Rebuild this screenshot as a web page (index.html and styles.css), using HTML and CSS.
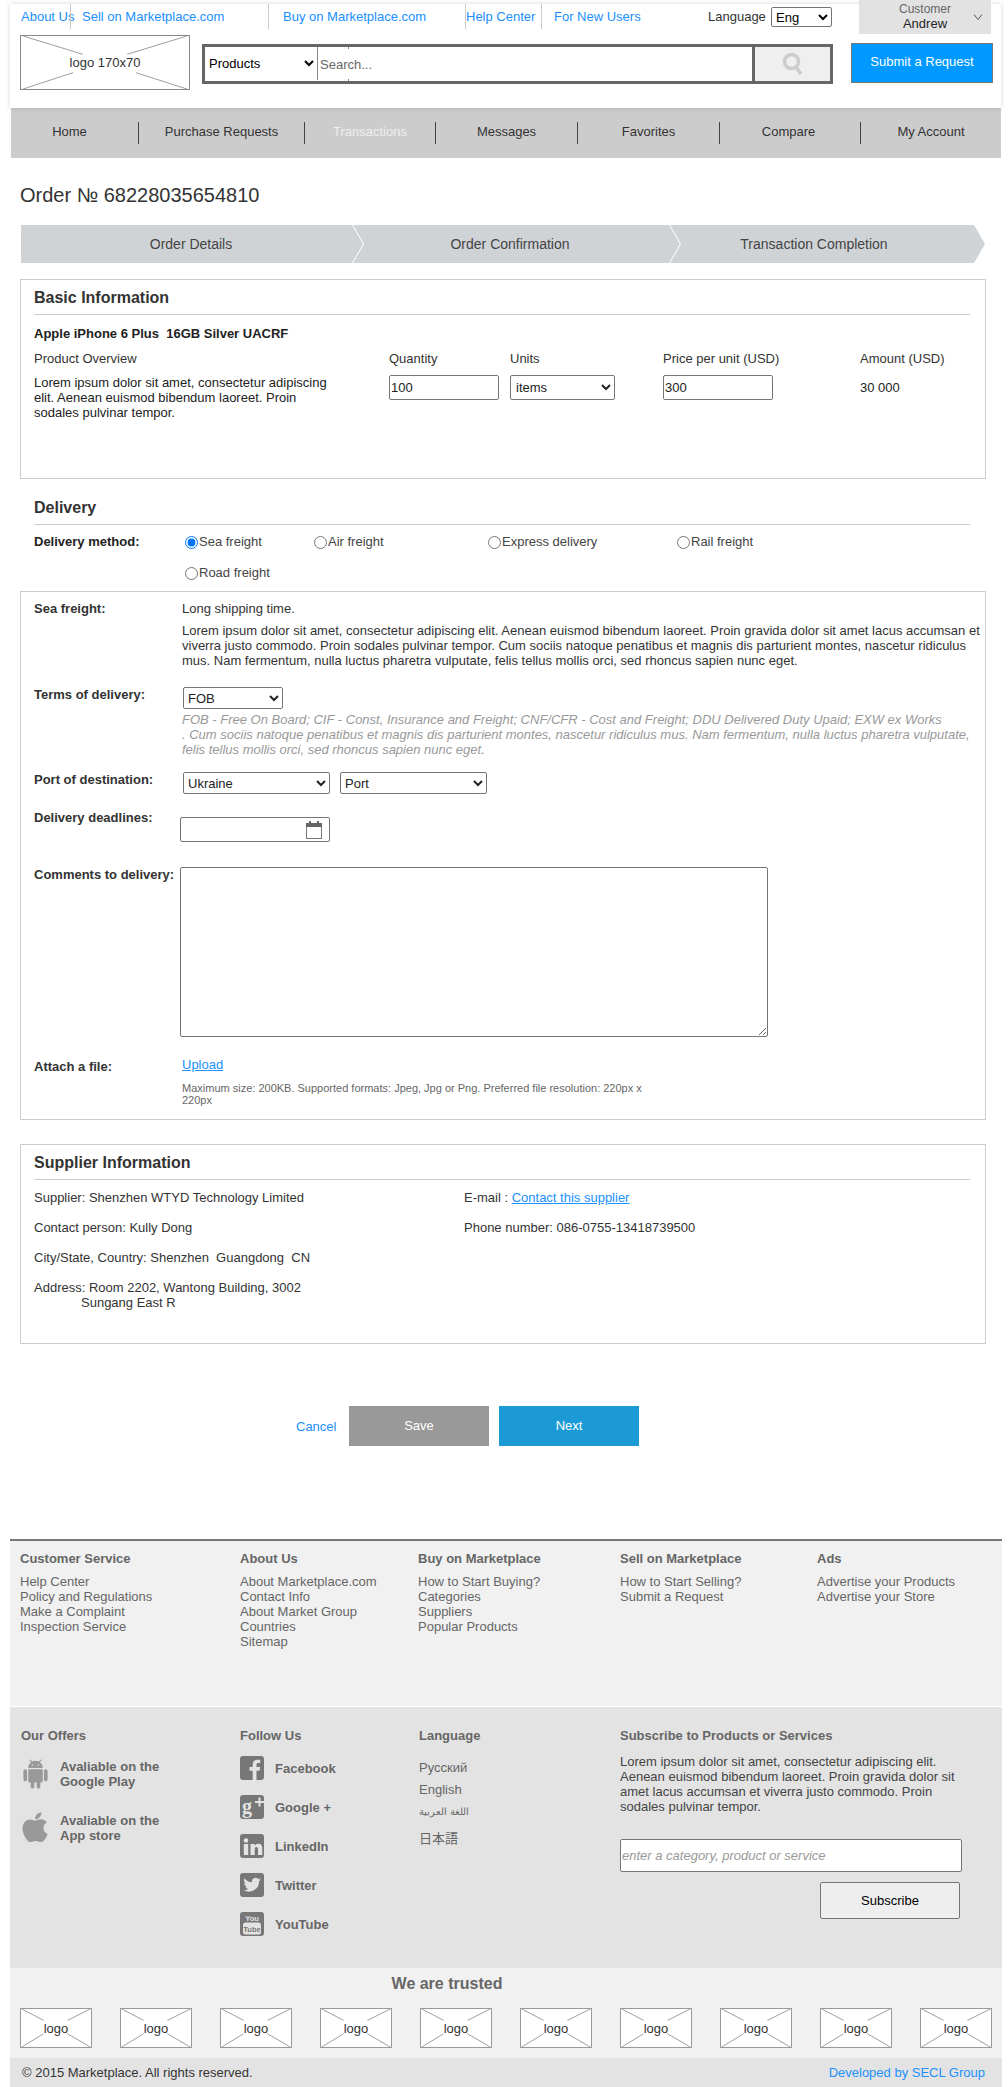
FILE: index.html
```html
<!DOCTYPE html>
<html lang="en">
<head>
<meta charset="utf-8">
<title>Order № 68228035654810</title>
<link rel="stylesheet" href="styles.css">
</head>
<body>
<svg class="defs" width="0" height="0" aria-hidden="true">
  <symbol id="ph-big" viewBox="0 0 170 55"><path d="M0 0L62 19M170 0L108 19M0 55L52 38M170 55L117 38"/></symbol>
  <symbol id="ph-small" viewBox="0 0 72 40"><path d="M0 0L23 12M72 0L48 12M0 40L23 26M72 40L48 26"/></symbol>
  <symbol id="i-android" viewBox="0 0 24 24"><path d="M6 18c0 .55.45 1 1 1h1v3.5c0 .83.67 1.5 1.5 1.5s1.5-.67 1.5-1.5V19h2v3.5c0 .83.67 1.5 1.5 1.5s1.5-.67 1.5-1.5V19h1c.55 0 1-.45 1-1V8H6v10zM3.5 8C2.67 8 2 8.67 2 9.5v7c0 .83.67 1.5 1.5 1.5S5 17.33 5 16.5v-7C5 8.67 4.33 8 3.5 8zm17 0c-.83 0-1.5.67-1.5 1.5v7c0 .83.67 1.5 1.5 1.5s1.5-.67 1.5-1.5v-7c0-.83-.67-1.5-1.5-1.5zm-4.97-5.84l1.3-1.3c.2-.2.2-.51 0-.71-.2-.2-.51-.2-.71 0l-1.48 1.48C13.85 1.23 12.95 1 12 1c-.96 0-1.86.23-2.66.63L7.85.15c-.2-.2-.51-.2-.71 0-.2.2-.2.51 0 .71l1.31 1.31C6.97 3.26 6 5.01 6 7h12c0-1.99-.97-3.75-2.47-4.84zM10 5H9V4h1v1zm5 0h-1V4h1v1z"/></symbol>
  <symbol id="i-apple" viewBox="3.5 3 17.5 19"><path d="M17.05 20.28c-.98.95-2.05.8-3.08.35-1.09-.46-2.09-.48-3.24 0-1.44.62-2.2.44-3.06-.35C2.79 15.25 3.51 7.59 9.05 7.31c1.35.07 2.29.74 3.08.8 1.18-.24 2.31-.93 3.57-.84 1.51.12 2.65.72 3.4 1.8-3.12 1.87-2.38 5.98.48 7.13-.57 1.5-1.31 2.99-2.54 4.09zM12.03 7.25c-.15-2.23 1.66-4.07 3.74-4.25.29 2.58-2.34 4.5-3.74 4.25z"/></symbol>
</svg>

<header class="top">
  <div class="toplinks">
    <a class="tl tl-about" href="#">About Us</a>
    <a class="tl tl-sell" href="#">Sell on Marketplace.com</a>
    <a class="tl tl-buy" href="#">Buy on Marketplace.com</a>
    <a class="tl tl-help" href="#">Help Center</a>
    <a class="tl tl-new" href="#">For New Users</a>
    <span class="lang-label">Language</span>
    <select class="lang-select"><option>Eng</option></select>
    <div class="customer">
      <div class="customer-names"><span class="cust-role">Customer</span><span class="cust-name">Andrew</span></div>
      <svg class="chev" width="10" height="8" viewBox="0 0 10 8"><path d="M1 1.500L5 6.500L9 1.500"/></svg>
    </div>
  </div>
  <div class="searchrow">
    <div class="ph ph-logo"><svg class="ph-lines"><use href="#ph-big"/></svg><span>logo 170x70</span></div>
    <div class="searchbar">
      <select class="search-cat"><option>Products</option></select>
      <input class="search-input" type="text" placeholder="Search...">
      <button class="search-btn" type="button" aria-label="Search">
        <svg width="22" height="24" viewBox="0 0 22 24"><circle cx="9.500" cy="9.500" r="7"/><path d="M14 15L19 22"/></svg>
      </button>
    </div>
    <a class="submit" href="#">Submit a Request</a>
  </div>
</header>

<nav class="mainnav">
  <a class="nv nv1" href="#">Home</a>
  <a class="nv nv2" href="#">Purchase Requests</a>
  <a class="nv nv3 nv-active" href="#">Transactions</a>
  <a class="nv nv4" href="#">Messages</a>
  <a class="nv nv5" href="#">Favorites</a>
  <a class="nv nv6" href="#">Compare</a>
  <a class="nv nv7" href="#">My Account</a>
</nav>

<main class="content">
  <h1 class="order-title">Order № 68228035654810</h1>

  <div class="steps">
    <div class="step step1">Order Details</div>
    <div class="step step2">Order Confirmation</div>
    <div class="step step3">Transaction Completion</div>
  </div>

  <section class="box box-basic">
    <h2 class="sec-title">Basic Information</h2>
    <div class="product-name">Apple iPhone 6 Plus&nbsp; 16GB Silver UACRF</div>
    <div class="order-grid">
      <div class="og-label">Product Overview</div>
      <div class="og-label">Quantity</div>
      <div class="og-label">Units</div>
      <div class="og-label">Price per unit (USD)</div>
      <div class="og-label">Amount (USD)</div>
      <p class="og-desc">Lorem ipsum dolor sit amet, consectetur adipiscing elit. Aenean euismod bibendum laoreet. Proin sodales pulvinar tempor.</p>
      <div><input class="field field-num" type="text" value="100"></div>
      <div><select class="field field-units"><option>items</option></select></div>
      <div><input class="field field-num" type="text" value="300"></div>
      <div class="og-amount">30 000</div>
    </div>
  </section>

  <section class="delivery">
    <h2 class="sec-title">Delivery</h2>
    <div class="method">
      <div class="method-label">Delivery method:</div>
      <div class="method-opts">
        <label class="opt"><input type="radio" name="m" checked>Sea freight</label>
        <label class="opt"><input type="radio" name="m">Air freight</label>
        <label class="opt"><input type="radio" name="m">Express delivery</label>
        <label class="opt"><input type="radio" name="m">Rail freight</label>
        <label class="opt"><input type="radio" name="m">Road freight</label>
      </div>
    </div>
  </section>

  <section class="box box-form">
    <div class="frow frow-sea">
      <div class="flabel">Sea freight:</div>
      <div class="fbody">
        <div class="sea-head">Long shipping time.</div>
        <p class="sea-text">Lorem ipsum dolor sit amet, consectetur adipiscing elit. Aenean euismod bibendum laoreet. Proin gravida dolor sit amet lacus accumsan et viverra justo commodo. Proin sodales pulvinar tempor. Cum sociis natoque penatibus et magnis dis parturient montes, nascetur ridiculus mus. Nam fermentum, nulla luctus pharetra vulputate, felis tellus mollis orci, sed rhoncus sapien nunc eget.</p>
      </div>
    </div>
    <div class="frow frow-terms">
      <div class="flabel">Terms of delivery:</div>
      <div class="fbody">
        <select class="sel sel-terms"><option>FOB</option></select>
        <p class="hint">FOB - Free On Board; CIF - Const, Insurance and Freight; CNF/CFR - Cost and Freight; DDU Delivered Duty Upaid; EXW ex Works<br>. Cum sociis natoque penatibus et magnis dis parturient montes, nascetur ridiculus mus. Nam fermentum, nulla luctus pharetra vulputate, felis tellus mollis orci, sed rhoncus sapien nunc eget.</p>
      </div>
    </div>
    <div class="frow frow-port">
      <div class="flabel">Port of destination:</div>
      <div class="fbody port-selects">
        <select class="sel sel-port"><option>Ukraine</option></select>
        <select class="sel sel-port"><option>Port</option></select>
      </div>
    </div>
    <div class="frow frow-date">
      <div class="flabel">Delivery deadlines:</div>
      <div class="fbody fbody-out">
        <div class="datebox">
          <svg width="18" height="19" viewBox="0 0 18 19"><rect x="1.500" y="3.500" width="15" height="15" fill="#fff" stroke="#777"/><rect x="1" y="3" width="16" height="4" fill="#666"/><path d="M5 1v4M13 1v4" stroke="#666" stroke-width="2"/></svg>
        </div>
      </div>
    </div>
    <div class="frow frow-comments">
      <div class="flabel">Comments to delivery:</div>
      <div class="fbody fbody-out"><textarea class="comments"></textarea></div>
    </div>
    <div class="frow frow-attach">
      <div class="flabel">Attach a file:</div>
      <div class="fbody">
        <a class="link" href="#">Upload</a>
        <p class="note">Maximum size: 200KB. Supported formats: Jpeg, Jpg or Png. Preferred file resolution: 220px x 220px</p>
      </div>
    </div>
  </section>

  <section class="box box-supplier">
    <h2 class="sec-title">Supplier Information</h2>
    <div class="supplier-grid">
      <div class="sup-col">
        <p>Supplier: Shenzhen WTYD Technology Limited</p>
        <p>Contact person: Kully Dong</p>
        <p>City/State, Country: Shenzhen&nbsp; Guangdong&nbsp; CN</p>
        <p class="sup-address">Address: Room 2202, Wantong Building, 3002 Sungang East R</p>
      </div>
      <div class="sup-col">
        <p>E-mail : <a class="link" href="#">Contact this supplier</a></p>
        <p>Phone number: 086-0755-13418739500</p>
      </div>
    </div>
  </section>

  <div class="actions">
    <a class="cancel" href="#">Cancel</a>
    <a class="btn btn-save" href="#">Save</a>
    <a class="btn btn-next" href="#">Next</a>
  </div>
</main>

<footer class="footer">
  <div class="f-links">
    <div class="fc fc1"><h3>Customer Service</h3><a href="#">Help Center</a><a href="#">Policy and Regulations</a><a href="#">Make a Complaint</a><a href="#">Inspection Service</a></div>
    <div class="fc fc2"><h3>About Us</h3><a href="#">About Marketplace.com</a><a href="#">Contact Info</a><a href="#">About Market Group</a><a href="#">Countries</a><a href="#">Sitemap</a></div>
    <div class="fc fc3"><h3>Buy on Marketplace</h3><a href="#">How to Start Buying?</a><a href="#">Categories</a><a href="#">Suppliers</a><a href="#">Popular Products</a></div>
    <div class="fc fc4"><h3>Sell on Marketplace</h3><a href="#">How to Start Selling?</a><a href="#">Submit a Request</a></div>
    <div class="fc fc5"><h3>Ads</h3><a href="#">Advertise your Products</a><a href="#">Advertise your Store</a></div>
  </div>

  <div class="f-offers">
    <div class="fc fc1">
      <h3>Our Offers</h3>
      <div class="offer">
        <svg class="offer-ico" width="29" height="34"><use href="#i-android"/></svg>
        <span>Avaliable on the<br>Google Play</span>
      </div>
      <div class="offer">
        <svg class="offer-ico" width="29" height="34"><use href="#i-apple"/></svg>
        <span>Avaliable on the<br>App store</span>
      </div>
    </div>
    <div class="fc fc2">
      <h3>Follow Us</h3>
      <div class="social">
        <svg width="24" height="24" viewBox="0 0 24 24"><rect width="24" height="24" rx="3" fill="#777"/><path fill="#e3e3e3" d="M16.500 24v-9.300h3.100l.5-3.600h-3.600V8.800c0-1 .3-1.700 1.800-1.700h1.900V3.900c-.3 0-1.500-.1-2.800-.1-2.800 0-4.700 1.700-4.700 4.800v2.500H9.500v3.600h3.200V24z"/></svg>
        <span>Facebook</span>
      </div>
      <div class="social">
        <svg width="24" height="24" viewBox="0 0 24 24"><rect width="24" height="24" rx="3" fill="#777"/><text class="gp-g" x="2" y="18">g</text><path d="M15 7h9M19.500 2.500v9" stroke="#e3e3e3" stroke-width="2"/></svg>
        <span>Google +</span>
      </div>
      <div class="social">
        <svg width="24" height="24" viewBox="0 0 24 24"><rect width="24" height="24" rx="3" fill="#777"/><circle cx="6" cy="6.500" r="2.300" fill="#e3e3e3"/><path fill="#e3e3e3" d="M3.800 10h4.400v11H3.800zM10.500 10h4.200v1.700c.7-1.200 2-2 3.600-2 3 0 4 1.900 4 5V21h-4.300v-5.500c0-1.500-.4-2.500-1.600-2.500s-1.700 1-1.700 2.500V21h-4.200z"/></svg>
        <span>LinkedIn</span>
      </div>
      <div class="social">
        <svg width="24" height="24" viewBox="0 0 24 24"><rect width="24" height="24" rx="3" fill="#777"/><path fill="#e3e3e3" d="M21 6.500c-.6.3-1.300.5-2.100.6.8-.5 1.300-1.200 1.600-2-.7.400-1.500.7-2.300.9a3.600 3.600 0 0 0-6.200 3.300A10.200 10.200 0 0 1 4.600 5.500a3.600 3.600 0 0 0 1.100 4.800c-.6 0-1.100-.2-1.600-.4 0 1.700 1.200 3.200 2.900 3.600-.5.100-1 .2-1.600.1.400 1.400 1.800 2.500 3.300 2.500A7.200 7.200 0 0 1 3.400 17a10.200 10.200 0 0 0 15.700-9c.7-.4 1.400-1 1.900-1.500z"/></svg>
        <span>Twitter</span>
      </div>
      <div class="social">
        <svg width="24" height="24" viewBox="0 0 24 24"><rect width="24" height="24" rx="3" fill="#777"/><text class="yt" x="12" y="9">You</text><rect x="3" y="10.500" width="18" height="12" rx="2.500" fill="#e3e3e3"/><text class="yt yt-dark" x="12" y="20">Tube</text></svg>
        <span>YouTube</span>
      </div>
    </div>
    <div class="fc fc3">
      <h3>Language</h3>
      <div class="langs">
        <a class="lg lg-ru" href="#">Русский</a>
        <a class="lg lg-en" href="#">English</a>
        <a class="lg lg-ar" href="#" dir="rtl">اللغة العربية</a>
        <a class="lg lg-ja" href="#">日本語</a>
      </div>
    </div>
    <div class="fc fc-sub">
      <h3>Subscribe to Products or Services</h3>
      <p class="sub-text">Lorem ipsum dolor sit amet, consectetur adipiscing elit. Aenean euismod bibendum laoreet. Proin gravida dolor sit amet lacus accumsan et viverra justo commodo. Proin sodales pulvinar tempor.</p>
      <input class="sub-input" type="text" placeholder="enter a category, product or service">
      <button class="sub-btn" type="button">Subscribe</button>
    </div>
  </div>

  <div class="f-trusted">
    <div class="trusted-title">We are trusted</div>
    <div class="trusted-logos">
      <div class="ph ph-small"><svg class="ph-lines"><use href="#ph-small"/></svg><span>logo</span></div>
      <div class="ph ph-small"><svg class="ph-lines"><use href="#ph-small"/></svg><span>logo</span></div>
      <div class="ph ph-small"><svg class="ph-lines"><use href="#ph-small"/></svg><span>logo</span></div>
      <div class="ph ph-small"><svg class="ph-lines"><use href="#ph-small"/></svg><span>logo</span></div>
      <div class="ph ph-small"><svg class="ph-lines"><use href="#ph-small"/></svg><span>logo</span></div>
      <div class="ph ph-small"><svg class="ph-lines"><use href="#ph-small"/></svg><span>logo</span></div>
      <div class="ph ph-small"><svg class="ph-lines"><use href="#ph-small"/></svg><span>logo</span></div>
      <div class="ph ph-small"><svg class="ph-lines"><use href="#ph-small"/></svg><span>logo</span></div>
      <div class="ph ph-small"><svg class="ph-lines"><use href="#ph-small"/></svg><span>logo</span></div>
      <div class="ph ph-small"><svg class="ph-lines"><use href="#ph-small"/></svg><span>logo</span></div>
    </div>
  </div>

  <div class="f-bottom">
    <span>© 2015 Marketplace. All rights reserved.</span>
    <a href="#">Developed by SECL Group</a>
  </div>
</footer>
</body>
</html>
```

FILE: styles.css
```css
* { box-sizing: border-box; }
html, body { margin: 0; padding: 0; background: #fff; }
body { font: 13px/15px "Liberation Sans", Arial, sans-serif; color: #333; width: 1008px; overflow-x: hidden; display: flow-root; }
a { text-decoration: none; color: inherit; }
p, h1, h2, h3 { margin: 0; }
.defs { display: block; height: 0; }

/* header */
.top { display: flow-root; margin: 4px 7px 0 10px; height: 104px; background: #fff; box-shadow: 0 0 5px rgba(0,0,0,.16); position: relative; }
.toplinks { display: flex; height: 34px; margin-top: -4px; align-items: flex-start; }
.tl { display: block; margin-top: 4px; height: 25px; line-height: 26px; border-left: 1px solid #ccc; color: #2090ff; white-space: nowrap; }
.tl-about { border-left: 0; width: 60px; padding-left: 11px; }
.tl-sell { width: 198px; padding-left: 11px; }
.tl-buy { width: 197px; padding-left: 14px; }
.tl-help { width: 76px; padding-left: 0; }
.tl-new { width: 167px; padding-left: 12px; }
.lang-label { color: #333; line-height: 34px; width: 63px; }
.lang-select { margin-top: 7px; width: 61px; height: 20px; font: 13px "Liberation Sans", Arial, sans-serif; background: #fff; border: 1px solid #767676; border-radius: 2px; color: #000; }
.customer { margin-left: 27px; width: 132px; height: 34px; background: #e2e2e2; display: flex; align-items: center; }
.customer-names { width: 132px; height: 34px; padding-top: 2px; text-align: center; display: flex; flex-direction: column; flex: none; }
.cust-role { font-size: 12px; line-height: 14px; color: #666; }
.cust-name { line-height: 15px; color: #222; }
.chev { margin-left: -18px; flex: none; }
.chev path { fill: none; stroke: #555; stroke-width: 1; }

.searchrow { display: flex; align-items: flex-start; padding: 1px 0 0 10px; }
.ph { position: relative; border: 1px solid #999; background: #fff; display: flex; align-items: center; justify-content: center; flex: none; }
.ph-lines { position: absolute; inset: 0; width: 100%; height: 100%; }
.ph-lines use { fill: none; stroke: #999; stroke-width: 1; }
.ph span { position: relative; color: #333; }
.ph-logo { width: 170px; height: 55px; font-size: 13px; border-color: #888; }
.searchbar { position: relative; margin: 9px 0 0 12px; width: 631px; height: 40px; border: 3px solid #666; display: flex; background: #fff; }
.searchbar::before, .searchbar::after { content: ""; position: absolute; left: 143px; width: 1px; height: 2px; background: #888; }
.searchbar::before { top: 0; }
.searchbar::after { bottom: 0; }
.search-cat { width: 113px; height: 33px; border: 0; background: #fff; font: 13px "Liberation Sans", Arial, sans-serif; color: #000; border-right: 1px solid #888; }
.search-input { flex: 1; border: 0; padding: 0 2px; font: 13px "Liberation Sans", Arial, sans-serif; min-width: 0; outline: none; }
.search-input::placeholder { color: #666; }
.search-btn { width: 78px; border: 0; border-left: 3px solid #666; background: #efefef; padding: 0; display: flex; align-items: center; justify-content: center; }
.search-btn circle, .search-btn path { fill: none; stroke: #ccc; stroke-width: 3.500; }
.submit { margin: 8px 0 0 18px; width: 142px; height: 40px; line-height: 36px; text-align: center; color: #fff; font-size: 13px; background: #0099ff; border: 1px solid #777; }

.mainnav { margin: 0 7px 0 11px; height: 50px; background: #ccc; display: flex; align-items: center; }
.nv { display: block; height: 22px; line-height: 20px; text-align: center; border-left: 1px solid #444; color: #333; }
.nv1 { width: 127px; border-left: 0; padding-right: 10px; }
.nv2 { width: 166px; }
.nv3 { width: 131px; }
.nv4 { width: 142px; }
.nv5 { width: 142px; }
.nv6 { width: 141px; padding-right: 3px; }
.nv7 { flex: 1; }
.nv-active { color: #eee; }

/* content */
.content { padding: 25px 21px 0 20px; }
.order-title { font-size: 20px; line-height: 24px; font-weight: 400; color: #333; margin-bottom: 18px; }
.steps { display: flex; margin-left: 1px; height: 38px; margin-bottom: 16px; width: 964px; }
.step { height: 38px; line-height: 38px; background: #d0d3d6; font-size: 14px; color: #444; text-align: center; flex: none; }
.step1 { width: 342px; padding-right: 2px; clip-path: polygon(0 0, calc(100% - 11px) 0, 100% 50%, calc(100% - 11px) 100%, 0 100%); }
.step2 { width: 327px; margin-left: -10px; padding-right: 13px; clip-path: polygon(0 0, calc(100% - 11px) 0, 100% 50%, calc(100% - 11px) 100%, 0 100%, 11px 50%); }
.step3 { width: 315px; margin-left: -10px; padding-right: 27px; clip-path: polygon(0 0, calc(100% - 11px) 0, 100% 50%, calc(100% - 11px) 100%, 0 100%, 11px 50%); }

.box { border: 1px solid #ccc; padding: 0 15px 0 13px; width: 966px; }
.box-basic { height: 200px; padding-top: 7px; }
.sec-title { font-size: 16px; line-height: 20px; font-weight: 700; color: #333; padding: 1px 0 6px; border-bottom: 1px solid #ccc; }
.product-name { margin-top: 11px; line-height: 16px; font-weight: 700; color: #222; font-size: 13px; }
.order-grid { display: grid; grid-template-columns: 355px 121px 153px 197px 1fr; grid-template-rows: 18px auto; row-gap: 7px; margin-top: 8px; }
.og-label { line-height: 18px; }
.og-desc { width: 305px; line-height: 15px; color: #222; }
.field { height: 25px; border: 1px solid #767676; border-radius: 2px; font: 13px "Liberation Sans", Arial, sans-serif; color: #222; background: #fff; padding: 0 1px; }
.field-num { width: 110px; }
.field-units { width: 105px; }
.og-amount { line-height: 25px; color: #222; }

.delivery { padding: 18px 17px 0 14px; }
.method { display: flex; margin-top: 7px; }
.method-label { width: 151px; line-height: 20px; font-weight: 700; flex: none; color: #222; }
.method-opts { display: grid; grid-template-columns: 129px 174px 189px 1fr; row-gap: 11px; flex: 1; }
.opt { line-height: 20px; display: flex; align-items: center; color: #444; white-space: nowrap; }
.opt input { margin: 0 1px 0 0; width: 13px; height: 13px; }

.box-form { margin-top: 8px; height: 529px; padding-right: 1px; }
.frow { display: flex; }
.flabel { width: 148px; flex: none; font-weight: 700; color: #333; line-height: 15px; }
.fbody { flex: 1; min-width: 0; }
.fbody-out { margin-left: -2px; }
.frow-sea { padding-top: 9px; }
.sea-text { margin-top: 7px; }
.frow-terms { margin-top: 19px; }
.sel { height: 22px; font: 13px "Liberation Sans", Arial, sans-serif; color: #222; background: #fff; border: 1px solid #767676; border-radius: 2px; }
.sel-terms { width: 100px; display: block; margin-left: 1px; }
.hint { margin-top: 3px; color: #999; font-style: italic; font-size: 13px; }
.frow-port { margin-top: 15px; }
.sel-port { width: 147px; }
.sel-port:first-child { margin-left: 1px; }
.port-selects { display: flex; gap: 10px; }
.frow-date { margin-top: 16px; }
.datebox { margin-top: 7px; width: 150px; height: 25px; border: 1px solid #767676; border-radius: 2px; background: #fff; display: flex; justify-content: flex-end; align-items: center; padding-right: 6px; }
.frow-comments { margin-top: 25px; }
.comments { display: block; width: 588px; height: 170px; border: 1px solid #767676; border-radius: 2px; background: #fff; margin: 0; }
.frow-attach { margin-top: 20px; }
.frow-attach .flabel { padding-top: 2px; }
.link { color: #2090ff; text-decoration: underline; }
.note { margin-top: 10px; width: 480px; font-size: 11px; line-height: 12px; color: #666; }

.box-supplier { margin-top: 24px; height: 200px; padding-top: 7px; }
.supplier-grid { display: grid; grid-template-columns: 430px 1fr; margin-top: 10px; }
.sup-col p { line-height: 15px; margin-bottom: 15px; color: #333; }
.sup-address { width: 300px; padding-left: 47px; text-indent: -47px; }

.actions { margin-top: 62px; display: flex; align-items: center; padding-left: 276px; }
.cancel { width: 53px; color: #2090ff; }
.btn { display: block; width: 140px; height: 40px; line-height: 40px; text-align: center; color: #fff; }
.btn-save { background: #999; margin-right: 10px; }
.btn-next { background: #1b9ad6; }

/* footer */
.footer { margin: 93px 6px 0 10px; border-top: 2px solid #777; }
.fc h3 { font-size: 13px; line-height: 16px; font-weight: 700; color: #666; }
.f-links { display: flex; height: 165px; background: #f1f1f1; padding: 10px 0 0 10px; margin-bottom: 1px; }
.f-links .fc a { display: block; line-height: 15px; color: #666; }
.f-links h3 { margin-bottom: 7px; }
.fc1 { width: 220px; }
.fc2 { width: 178px; }
.fc3 { width: 202px; }
.fc4 { width: 197px; }
.f-offers { display: flex; height: 261px; background: #e3e3e3; padding: 21px 0 0 10px; }
.f-offers .fc1 h3 { margin-left: 1px; margin-bottom: 13px; }
.offer { display: flex; align-items: center; height: 34px; margin-bottom: 20px; margin-left: 1px; font-weight: 700; color: #666; }
.offer span { margin-left: 10px; line-height: 15px; }
.offer-ico { fill: #999; flex: none; }
.f-offers .fc2 h3 { margin-bottom: 12px; }
.social { display: flex; align-items: center; height: 24px; margin-bottom: 15px; font-weight: 700; color: #666; }
.social svg { flex: none; margin-right: 11px; }
.gp-g { font: 700 20px "Liberation Serif", serif; fill: #e3e3e3; }
.yt { font: 700 7.500px "Liberation Sans", sans-serif; fill: #e3e3e3; text-anchor: middle; }
.yt-dark { fill: #777; }
.f-offers .fc3 { padding-left: 1px; }
.langs { margin-top: 13px; display: flex; flex-direction: column; }
.lg { display: block; color: #666; line-height: 22px; }
.lg-ar { font-size: 10px; text-align: left; width: 50px; line-height: 22px; }
.lg-ja { font: 13px/30px "Noto Sans CJK JP", sans-serif; }
.fc-sub { width: 342px; }
.sub-text { margin-top: 10px; color: #444; line-height: 15px; }
.sub-input { display: block; margin-top: 25px; width: 342px; height: 33px; border: 1px solid #767676; border-radius: 2px; padding: 0 1px; font: italic 13px "Liberation Sans", Arial, sans-serif; background: #fff; }
.sub-input::placeholder { color: #999; }
.sub-btn { display: block; margin: 10px 0 0 200px; width: 140px; height: 37px; border: 1px solid #767676; border-radius: 2px; background: #eee; color: #000; font: 13px "Liberation Sans", Arial, sans-serif; }
.f-trusted { height: 90px; background: #f1f1f1; padding: 6px 0 0 10px; }
.trusted-title { width: 854px; text-align: center; font-size: 16px; line-height: 20px; font-weight: 700; color: #666; }
.trusted-logos { display: flex; gap: 28px; margin-top: 14px; }
.ph-small { width: 72px; height: 40px; }
.f-bottom { height: 29px; background: #e3e3e3; display: flex; justify-content: space-between; align-items: center; padding: 0 17px 0 12px; color: #333; }
.f-bottom a { color: #2090ff; }
```
